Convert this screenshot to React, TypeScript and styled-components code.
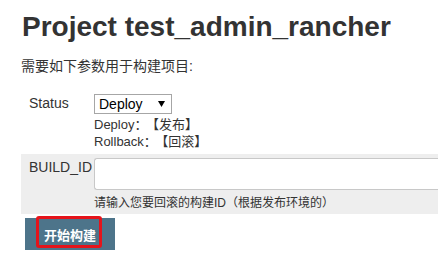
import styled, { createGlobalStyle } from 'styled-components';

const GlobalStyle = createGlobalStyle`
  html, body {
    margin: 0;
    padding: 0;
    background: #fff;
    overflow: hidden;
  }
  body {
    font-family: "Liberation Sans", Arial, "Noto Sans CJK SC", sans-serif;
    color: #333;
  }
`;

const Page = styled.div`
  padding-left: 21px;
`;

const Title = styled.h1`
  margin: 11px 0 0 1px;
  font-size: 28px;
  line-height: 32px;
  font-weight: bold;
  color: #333;
`;

const Intro = styled.p`
  margin: 13px 0 0 0;
  font-size: 14px;
  line-height: 20px;
`;

const Form = styled.div`
  margin-top: 14px;
  display: flex;
  flex-direction: column;
`;

const Row = styled.div<{ $shaded?: boolean }>`
  display: grid;
  grid-template-columns: 73px 1fr;
  padding: ${({ $shaded }) => ($shaded ? '4px 0 3px' : '4px 0 4px')};
  background: ${({ $shaded }) => ($shaded ? '#eeeeee' : 'transparent')};
`;

const Label = styled.div`
  padding-left: 8px;
  font-size: 14px;
  line-height: 18px;
`;

const Field = styled.div`
  display: flex;
  flex-direction: column;
  align-items: flex-start;
  min-width: 0;
`;

const SelectBox = styled.div`
  box-sizing: border-box;
  width: 78px;
  height: 20px;
  border: 1px solid #a6a6a6;
  background: #fff;
  display: flex;
  align-items: center;
  justify-content: space-between;
  padding: 0 6px 0 4px;
  font-size: 14px;
  color: #000;
`;

const Desc = styled.div`
  margin-top: 2px;
  font-size: 13px;
  line-height: 17px;
`;

const Tag = styled.span`
  margin-left: 5px;
`;

const TextInput = styled.input`
  box-sizing: border-box;
  width: 100%;
  height: 32px;
  margin: 0;
  border: 1px solid #c8c8c8;
  border-right: none;
  border-radius: 3px 0 0 3px;
  background: #fff;
  outline: none;
`;

const Hint = styled.div`
  margin-top: 5px;
  font-size: 12px;
  line-height: 16px;
`;

const Actions = styled.div`
  margin: 4px 0 0 4px;
  position: relative;
  width: 90px;
`;

const BuildButton = styled.button`
  width: 90px;
  height: 32px;
  border: none;
  background: #4d748a;
  color: #fff;
  font-family: "Noto Sans CJK SC", sans-serif;
  font-weight: bold;
  font-size: 13px;
  padding: 0;
`;

const Highlight = styled.div`
  position: absolute;
  left: 11px;
  top: -2px;
  width: 66px;
  height: 32px;
  box-sizing: border-box;
  border: 3px solid #e5141b;
  border-radius: 3px;
  pointer-events: none;
`;

export default function App() {
  return (
    <Page>
      <GlobalStyle />
      <Title>Project test_admin_rancher</Title>
      <Intro>需要如下参数用于构建项目:</Intro>
      <Form>
        <Row>
          <Label>Status</Label>
          <Field>
            <SelectBox>
              <span>Deploy</span>
              <svg width="7" height="6" viewBox="0 0 7 6">
                <path d="M0 0 H7 L3.5 6 Z" fill="#000" />
              </svg>
            </SelectBox>
            <Desc>
              Deploy：<Tag>【发布】</Tag>
              <br />
              Rollback：<Tag>【回滚】</Tag>
            </Desc>
          </Field>
        </Row>
        <Row $shaded>
          <Label>BUILD_ID</Label>
          <Field>
            <TextInput type="text" />
            <Hint>请输入您要回滚的构建ID（根据发布环境的）</Hint>
          </Field>
        </Row>
      </Form>
      <Actions>
        <BuildButton>开始构建</BuildButton>
        <Highlight />
      </Actions>
    </Page>
  );
}
